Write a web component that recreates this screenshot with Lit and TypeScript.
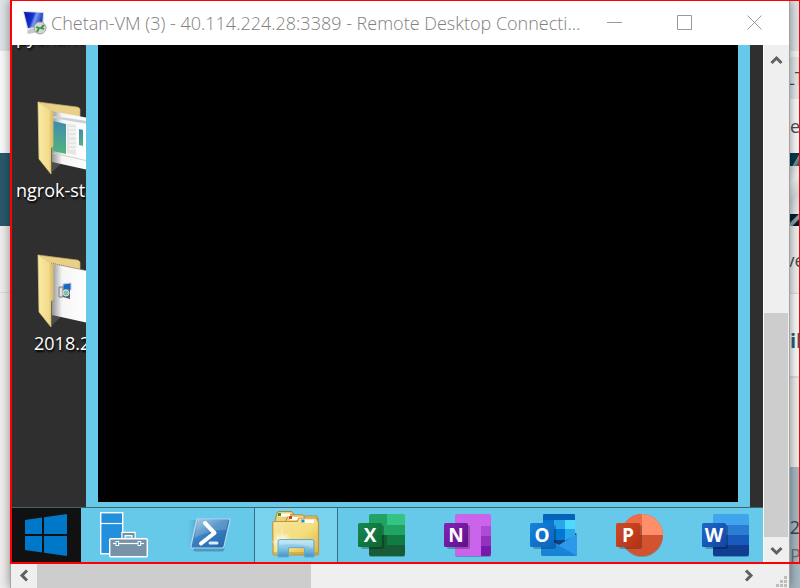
import { LitElement, html, css, svg } from "lit";
import { customElement, property } from "lit/decorators.js";

const desktopItems = [
  { label: "pycharm-c", preview: "", indent: false },
  { label: "ngrok-sta", preview: "sheet", indent: false },
  { label: "2018.2", preview: "setup", indent: true },
];

const officeTile = (letter: string, from: string, to: string, id: string) => svg`
  <defs><linearGradient id=${id} x1="0" y1="0" x2="1" y2="1"><stop offset="0" stop-color=${from}/><stop offset="1" stop-color=${to}/></linearGradient></defs>
  <rect x="3" y="12" width="23" height="24" rx="2" fill="#000" opacity=".25"/>
  <rect x="0" y="10" width="24" height="24" rx="1.5" fill="url(#${id})"/>
  <text x="12" y="29" text-anchor="middle" font-family="Open Sans, sans-serif" font-weight="700" font-size="19" fill="#fff">${letter}</text>`;

const icons: Record<string, { w: number; h: number; art: unknown }> = {
  start: {
    w: 42, h: 42,
    art: svg`<path fill="#0078c9" d="M0 6 17 3.5V20H0zM19 3.2 42 0v20H19zM0 22h17v16.500L0 36zM19 22h23v20l-23-3.200z"/>`,
  },
  server: {
    w: 48, h: 46,
    art: svg`
      <rect x=".7" y=".7" width="22" height="41" fill="#2390dd" stroke="#fff" stroke-width="1.4"/>
      <path d="M0 11.500h23" stroke="#fff" stroke-width="1.2"/>
      <path d="M23.500 27v-5h10v5" fill="none" stroke="#fff" stroke-width="4.500"/>
      <path d="M23.500 27v-5h10v5" fill="none" stroke="#7692a5" stroke-width="2"/>
      <rect x="9.700" y="26.700" width="37.600" height="18" rx="1" fill="#7893a7" stroke="#fff" stroke-width="1.4"/>
      <path d="M13 31.500h31" stroke="#fff" stroke-width="1.200"/>
      <rect x="16" y="29.500" width="2.600" height="4" fill="#2390dd" stroke="#fff"/>
      <rect x="38" y="29.500" width="2.600" height="4" fill="#2390dd" stroke="#fff"/>`,
  },
  powershell: {
    w: 46, h: 34,
    art: svg`
      <defs>
        <linearGradient id="ps" x1="0" y1="0" x2=".8" y2="1"><stop offset="0" stop-color="#a9cde6"/><stop offset=".45" stop-color="#3c84c4"/><stop offset="1" stop-color="#2465ad"/></linearGradient>
        <linearGradient id="psb" x1="0" x2="1"><stop offset="0" stop-color="#5aa6d2" stop-opacity="0"/><stop offset="1" stop-color="#4690c8" stop-opacity=".8"/></linearGradient>
      </defs>
      <path d="M0 2h12L6 30H0z" fill="url(#psb)"/>
      <path d="M12 3h31l-6 29q-.5 1.500-2 1.500H8q-2 0-1.500-2z" fill="#26618d" opacity=".45"/>
      <path d="M11 1h30.500q1.800 0 1.400 1.800L37 28.500Q36.500 30 35 30H5.500q-2 0-1.500-2L9.500 2.500Q10 1 11 1z" fill="url(#ps)" stroke="#b5d9ed" stroke-width="1.200"/>
      <path d="M11 2h30l-2 10Q25 11 7.500 20z" fill="#fff" opacity=".17"/>
      <path d="m18 5 9.500 10L14 25.500" fill="none" stroke="#fff" stroke-width="4" stroke-linejoin="round" stroke-linecap="round"/>
      <path d="M23 25h7" stroke="#d7edfa" stroke-width="3" stroke-linecap="round"/>`,
  },
  explorer: {
    w: 48, h: 48,
    art: svg`
      <defs>
        <linearGradient id="ex" x1="0" y1="0" x2="1" y2="1"><stop offset="0" stop-color="#f6e5a1"/><stop offset=".55" stop-color="#f4dd7c"/><stop offset="1" stop-color="#dfb23c"/></linearGradient>
        <linearGradient id="exb" x1="0" y1="0" x2="0" y2="1"><stop offset="0" stop-color="#b4e3f7"/><stop offset=".5" stop-color="#79c3e8"/><stop offset="1" stop-color="#3a93d0"/></linearGradient>
        <radialGradient id="exg"><stop offset="0" stop-color="#fff"/><stop offset="1" stop-color="#fff" stop-opacity="0"/></radialGradient>
      </defs>
      <g fill="#eed279" stroke="#b18b3c">
        <path d="M2.500 12 5 2q.5-1.500 2-1.500h12q1.500 0 2 1.500l1 3h23v12h-42z"/>
        <path d="M14 9.500 16 5q.5-1.200 2-1.200h12q1.500 0 2 1.200l.8 2.500H46v10H14z"/>
      </g>
      <path d="M7 2.500h11v3H7zM18 6h13v3H18z" fill="#fff"/>
      <rect x="6" y="2" width="3" height="3" fill="#339541"/><rect x="17" y="5" width="3" height="3" fill="#d8401c"/>
      <path d="M.700 12q0-1.500 1.500-1.500H25l2-3.500h16q2 0 2.500 1.500l1 3.500v30.500q0 1.500-1.500 1.500H2.500Q1 44 1 42.500z" fill="url(#ex)" stroke="#bd963e" stroke-width="1.200"/>
      <path d="M30 8.500h12v3.500H30z" fill="#fff"/><rect x="29.500" y="8.500" width="3" height="3" fill="#2f86cd"/>
      <path d="M1 41h45v3H2z" fill="#b98d31" opacity=".45"/>
      <circle cx="10" cy="31" r="10" fill="url(#exg)"/>
      <path d="M0 31h20M10 18v26M3 22l14 18M17 22 3 40" stroke="#fff" stroke-width=".7" opacity=".6"/>
      <path d="M8 28.500h32q2 0 2 2V46h-9.500v-8q0-1.500-1.500-1.500H18q-1.500 0-1.500 1.500v8H6V30.500q0-2 2-2z" fill="url(#exb)" opacity=".93" stroke="#58a9d9"/>
      <path d="M7 29.500h34v8Q27 31 7 34z" fill="#fff" opacity=".25"/>`,
  },
  excel: {
    w: 48, h: 44,
    art: svg`
      <rect x="11" y="2" width="36" height="42" rx="2" fill="#175d35" opacity=".4"/>
      <path d="M13 1h16v11H11V3q0-2 2-2z" fill="#21a366"/><path d="M29 1h16q2 0 2 2v9H29z" fill="#33c481"/>
      <path d="M29 12h18v10H29z" fill="#21a366"/><path d="M29 22h18v10H29z" fill="#107c41"/>
      <path d="M11 12h18v10H11z" fill="#21a366"/>
      <path d="M11 22h18v10h18v9q0 2-2 2H13q-2 0-2-2z" fill="#185c37"/>
      ${officeTile("X", "#18884f", "#0b6731", "gx")}`,
  },
  onenote: {
    w: 48, h: 44,
    art: svg`
      <rect x="11" y="2" width="36" height="42" rx="2" fill="#583470" opacity=".4"/>
      <rect x="11" y="1" width="36" height="42" rx="2" fill="#ca64ea"/>
      <path d="M37 13h10v10H37z" fill="#ae4bd5"/><path d="M37 23h10v10H37z" fill="#9332bf"/><path d="M37 33h10v8q0 2-2 2h-8z" fill="#7719aa"/>
      ${officeTile("N", "#8324b2", "#5f118d", "gn")}`,
  },
  outlook: {
    w: 48, h: 44,
    art: svg`
      <path d="M13 2q0-1 1.500-1h29q1.500 0 1.500 1v20H13z" fill="#0364b8"/>
      <path d="M13 7h11v11H13zM24 18h11v9H24z" fill="#0078d4"/><path d="M24 7h11v9H24z" fill="#28a8ea"/>
      <path d="M35 7h10v9H35z" fill="#50d9ff"/><path d="M35 16h10v9H35z" fill="#28a8ea"/><path d="M24 16h11v11H24z" fill="#0078d4"/>
      <path d="M24 27h11v-2h10v-5l2 1v3L30 33l-6-3z" fill="#12427e"/>
      <path d="M35 16h10v6l-10 6z" fill="#28a8ea"/>
      <path d="M47 21v20q0 2-2 2H13q-2 0-2-2V25l18 8z" fill="#1fa0e5"/>
      <path d="m11 22 36 20q-1 1-2 1H13q-2 0-2-2z" fill="#1784d9"/>
      <path d="M25 30.500 47 43V21L29 32z" fill="#2e99ea"/>
      ${officeTile("O", "#1784d9", "#0a62c2", "go")}`,
  },
  powerpoint: {
    w: 48, h: 44,
    art: svg`
      <circle cx="26" cy="23" r="21" fill="#913b23" opacity=".4"/>
      <circle cx="26" cy="22" r="21" fill="#d35230"/>
      <path d="M5 22A21 21 0 0 1 26 1v21z" fill="#ed6c47"/><path d="M26 1a21 21 0 0 1 21 21H26z" fill="#ff8f6b"/>
      ${officeTile("P", "#cb4c28", "#b73113", "gp")}`,
  },
  word: {
    w: 48, h: 44,
    art: svg`
      <rect x="11" y="2" width="36" height="42" rx="2" fill="#153a75" opacity=".4"/>
      <path d="M13 1h32q2 0 2 2v9H11V3q0-2 2-2z" fill="#41a5ee"/><path d="M11 12h36v10H11z" fill="#2b7cd3"/>
      <path d="M11 22h36v10H11z" fill="#185abd"/><path d="M11 32h36v9q0 2-2 2H13q-2 0-2-2z" fill="#103f91"/>
      ${officeTile("W", "#1f67c8", "#1147a5", "gw")}`,
  },
};

const drawIcon = (name: string) => {
  const { w, h, art } = icons[name];
  return html`<svg width=${w} height=${h} viewBox="0 0 ${w} ${h}" aria-hidden="true">${art}</svg>`;
};

const chevron = (d: string) =>
  html`<svg width="13" height="13" viewBox="0 0 13 13" aria-hidden="true"><path d=${d} fill="none" stroke="#606060" stroke-width="3"/></svg>`;

@customElement("folder-icon")
export class FolderIcon extends LitElement {
  @property() preview = "";

  static styles = css`
    :host { display: block; height: 78px; }
    svg { display: block; }
  `;

  render() {
    return html`<svg width="50" height="78" viewBox="0 0 50 78" aria-hidden="true">
      <defs>
        <linearGradient id="f" x1="0" y1="0" x2="1" y2="0"><stop offset="0" stop-color="#f9eaa5"/><stop offset=".7" stop-color="#f3dc8b"/><stop offset="1" stop-color="#d9b861"/></linearGradient>
        <linearGradient id="g" x1="0" y1="0" x2="0" y2="1"><stop offset="0" stop-color="#408bb0"/><stop offset="1" stop-color="#53b477"/></linearGradient>
        <linearGradient id="s" x1="0" y1="0" x2="1" y2="0"><stop offset="0" stop-color="#8c8c8c"/><stop offset=".3" stop-color="#f5f5f5"/><stop offset="1" stop-color="#fff"/></linearGradient>
      </defs>
      <path d="M2 2 41 7q2 0 3 2v10L15 22z" fill="#e9d08a" stroke="#c5a95e" stroke-width=".7"/>
      <path d="M16 60v12l9-8z" fill="#888" opacity=".35"/>
      <path d="m15 11 37 7v52L16 62z" fill="url(#s)"/>
      ${this.preview === "sheet"
        ? svg`<path d="m17 16 35 5v3l-35-6z" fill="#cbd0d8"/><path d="m17 21 13 3v30l-13-3z" fill="url(#g)"/><path d="m31 24 9 1v30l-9-2z" fill="#e6e6e6"/><path d="M33 28h7M33 32h7M33 36h7M33 41h7M33 45h7M33 49h7" stroke="#fff"/><path d="m43 29 4 1v16l-4-1z" fill="url(#g)"/><path d="m17 53 35 8" stroke="#d0d0d0"/>`
        : svg`<path d="m15 10 37 8" stroke="#6f6b60" stroke-dasharray="1 1"/><path d="m27 31 8-1v7h-8z" fill="#1767c4" stroke="#b8cbe0"/><path d="M23 34h4v10h-4z" fill="#e0e0e0" stroke="#777"/><path d="m27 38 7-2v10l-7-2z" fill="#52616f"/><circle cx="30" cy="40" r="3" fill="#79c3a9" stroke="#ddd"/>`}
      <path d="M2 2 17 12v34l-2 2v26L3 59z" fill="url(#f)" stroke="#e3cb7f" stroke-width=".7"/>
    </svg>`;
  }
}

@customElement("remote-taskbar")
export class RemoteTaskbar extends LitElement {
  static styles = css`
    :host { display: flex; height: 56px; box-sizing: border-box; border-top: 1px solid #43636f; background: #67c9ea; overflow: hidden; }
    button { flex: none; width: 86px; padding: 0 0 2px; border: 0; background: none; display: flex; align-items: center; justify-content: center; }
    .start { width: 70px; background: #111; }
    .active { background: #78d1ed; border: solid #397082; border-width: 0 1px; width: 84px; margin: 0 1px; }
    svg { display: block; flex: none; }
  `;

  render() {
    const apps = [
      ["server", "Server Manager"], ["powershell", "Windows PowerShell"], ["explorer", "File Explorer"],
      ["excel", "Excel"], ["onenote", "OneNote"], ["outlook", "Outlook"], ["powerpoint", "PowerPoint"], ["word", "Word"],
    ];
    return html`
      <button class="start" aria-label="Start">${drawIcon("start")}</button>
      ${apps.map(([icon, name]) => html`<button class=${icon === "explorer" ? "active" : ""} aria-label=${name}>${drawIcon(icon)}</button>`)}
    `;
  }
}

@customElement("app-root")
export class AppRoot extends LitElement {
  static styles = css`
    :host { display: flex; position: relative; height: 100vh; min-height: 400px; overflow: hidden; background: #f0eeec; font-family: "Open Sans", "Noto Sans", sans-serif; }
    svg { display: block; flex: none; }
    button { border: 0; padding: 0; background: none; display: flex; align-items: center; justify-content: center; flex: none; }
    .behind { flex: none; width: 10px; display: flex; flex-direction: column; overflow: hidden; font-size: 18px; line-height: 24px; color: #42505a; white-space: nowrap; }
    .behind div { flex: none; box-sizing: border-box; display: flex; align-items: center; }
    .behind .rest { flex: 1; }
    .tabs { height: 51px; background: #dfe3e7; }
    .pale { height: 102px; background: #fafafa; }
    .banner { height: 73px; background: #29596d; }
    .line { height: 67px; border-bottom: 1px solid #dedddd; }
    .gap { height: 6px; background: #f7f7f7; }
    .address { height: 42px; background: #e5e8eb; justify-content: center; }
    .marks { height: 54px; background: #fafafa; }
    .stripe { height: 13px; background: linear-gradient(120deg, #053c4c 55%, #7e9ba5 60%, #0b3c4c); }
    .photo { height: 48px; background: linear-gradient(135deg, #dbe0e2, #f0f2f3 30%, #d4dadd 60%, #edf0f1); }
    .stripe.low { height: 12px; background: linear-gradient(135deg, #041c2d 35%, #8ca1aa 45%, #8ca1aa 60%, #041c2d 70%); }
    .word { height: 68px; justify-content: center; border-bottom: 1px solid #dedddd; background: #f0efef; }
    .heading { height: 84px; padding-top: 12px; background: #fafafa; color: #2a6379; font-weight: 700; border-bottom: 2px solid #e0dfde; font-size: 20px; }
    .plain { height: 89px; }
    .foot { background: #a6b8c2; }
    .behind .foot { display: block; padding-top: 48px; }
    .foot p { margin: 0 0 4px; display: flex; justify-content: flex-end; color: #344754; }
    .foot .start { justify-content: flex-start; color: #66737b; }

    .window { position: relative; flex: 1; min-width: 0; display: flex; flex-direction: column; background: #fff; border: solid #a0a4a6; border-width: 0 1px; box-shadow: 0 0 10px rgba(0, 0, 0, .45); }
    .title { flex: none; height: 45px; display: flex; align-items: center; padding-left: 11px; }
    h1 { flex: 1; min-width: 0; margin: 0 0 0 4px; font-size: 18px; line-height: 26px; font-weight: 300; color: #808080; white-space: nowrap; }
    .title button { width: 70px; height: 44px; }
    .body { flex: 1; min-height: 0; display: flex; }
    .remote { flex: 1; min-width: 0; display: flex; flex-direction: column; background: #2f2f2f; }
    .stage { flex: 1; min-height: 0; display: flex; padding-right: 13px; }
    .desktop { flex: none; width: 75px; overflow: hidden; box-sizing: border-box; }
    .item { height: 153px; overflow: hidden; }
    .item:first-child { height: 55px; }
    .item folder-icon { margin-left: 25px; }
    .label { padding-left: 5px; font-size: 18px; line-height: 24px; color: #fff; white-space: nowrap; text-shadow: 1px 2px 2px #000; }
    .item:first-child .label { margin-top: -20px; padding-bottom: 20px; }
    .label.indent { padding-left: 23px; }
    .app { flex: 1; border: solid #67c9ea; border-width: 0 12px 5px; background: #000; }

    .vbar { flex: none; width: 26px; box-sizing: border-box; border-left: 1px solid #fff; background: #efefef; display: flex; flex-direction: column; }
    .vbar button { height: 26px; }
    .vbar button:first-child { height: 30px; }
    .vtrack { flex: 1; display: flex; flex-direction: column; justify-content: flex-end; }
    .vthumb { height: 48.5%; margin-right: 1px; background: #cdcdcd; }
    .hbar { flex: none; height: 25px; display: flex; background: #efefef; }
    .hbar button { width: 26px; }
    .htrack { flex: 1; }
    .hthumb { width: 39.2%; height: 100%; background: #cdcdcd; }
    .grip { flex: none; width: 28px; display: flex; align-items: flex-end; justify-content: flex-end; }
    .frame { position: absolute; inset: 0 0 24px 10px; border: solid #f00; border-width: 1px 1px 2px 2px; pointer-events: none; }
  `;

  render() {
    return html`
      <div class="behind"><div class="tabs"></div><div class="pale"></div><div class="banner"></div><div class="line"></div><div class="rest"></div></div>
      <main class="window">
        <header class="title">
          <svg width="25" height="27" viewBox="0 0 25 27" aria-hidden="true">
            <defs><linearGradient id="m" x1="0" y1="0" x2="1" y2=".3"><stop offset="0" stop-color="#0716a0"/><stop offset=".5" stop-color="#1730d2"/><stop offset=".65" stop-color="#7a9bea"/><stop offset="1" stop-color="#1934c8"/></linearGradient></defs>
            <path d="m7 20 9-1v4l-9 2q-4-1 0-5z" fill="#c9c9c9"/>
            <path d="m1 2 21 1v16L5 20z" fill="#d3d7e0"/><path d="m2 3 19 1-1 13-14 2z" fill="url(#m)"/>
            <circle cx="18" cy="19" r="6" fill="#d3d4d3" stroke="#a3a6a3"/>
            <path d="m14 18 3 1-2 4M22 16l-3 3 3 1" fill="none" stroke="#37963a" stroke-width="1.800"/>
          </svg>
          <h1>Chetan-VM (3) - 40.114.224.28:3389 - Remote Desktop Connecti...</h1>
          <button aria-label="Minimize"><svg width="15" height="15" viewBox="0 0 15 15"><path d="M0 7.500h15" stroke="#999"/></svg></button>
          <button aria-label="Maximize"><svg width="15" height="15" viewBox="0 0 15 15"><path d="M.5.5h14v14H.5z" fill="none" stroke="#999"/></svg></button>
          <button aria-label="Close"><svg width="15" height="15" viewBox="0 0 15 15"><path d="m.5.5 14 14m0-14-14 14" stroke="#999"/></svg></button>
        </header>
        <div class="body">
          <section class="remote">
            <div class="stage">
              <div class="desktop">
                ${desktopItems.map((item) => html`<div class="item">
                  ${item.preview ? html`<folder-icon preview=${item.preview}></folder-icon>` : ""}
                  <div class="label ${item.indent ? "indent" : ""}">${item.label}</div>
                </div>`)}
              </div>
              <div class="app"></div>
            </div>
            <remote-taskbar></remote-taskbar>
          </section>
          <div class="vbar">
            <button aria-label="Scroll up">${chevron("M1.500 9 6.500 4l5 5")}</button>
            <div class="vtrack"><div class="vthumb"></div></div>
            <button aria-label="Scroll down">${chevron("m1.500 4 5 5 5-5")}</button>
          </div>
        </div>
        <div class="hbar">
          <button aria-label="Scroll left">${chevron("M9 1.500 4 6.500l5 5")}</button>
          <div class="htrack"><div class="hthumb"></div></div>
          <button aria-label="Scroll right">${chevron("m4 1.500 5 5-5 5")}</button>
          <div class="grip"><svg width="13" height="12" viewBox="0 0 13 12"><path d="M8 0h3v3H8zM4 4h3v3H4zM8 4h3v3H8zM0 8h3v3H0zM4 8h3v3H4zM8 8h3v3H8z" fill="#bdbdbd"/></svg></div>
        </div>
      </main>
      <div class="behind">
        <div class="tabs"></div><div class="gap"></div><div class="address">LT</div><div class="marks">ea</div>
        <div class="stripe"></div><div class="photo"></div><div class="stripe low"></div>
        <div class="word">ve</div><div class="heading">il</div><div class="plain"></div>
        <div class="rest foot"><p>32</p><p class="start">P</p></div>
      </div>
      <div class="frame"></div>
    `;
  }
}
